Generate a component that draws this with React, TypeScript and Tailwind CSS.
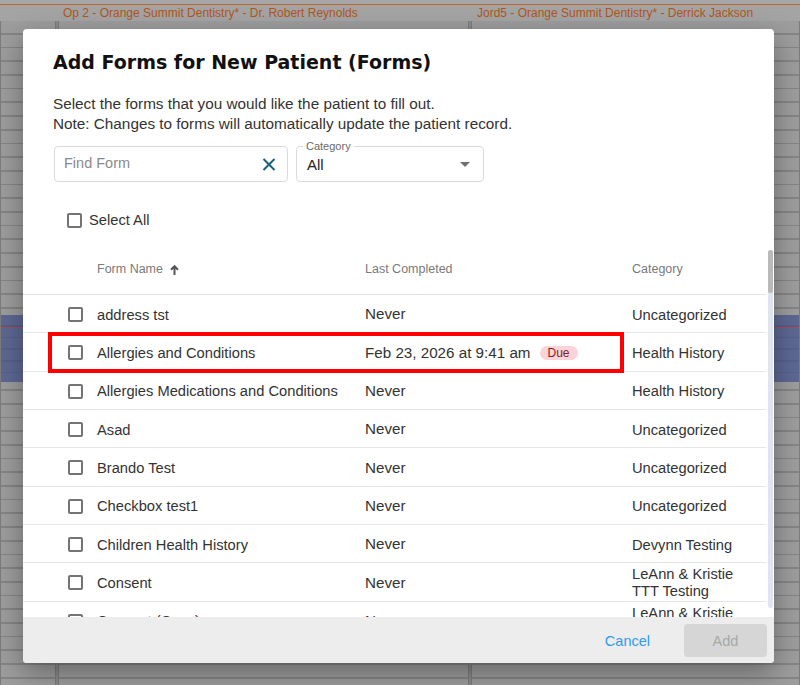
import { ReactNode } from 'react'

type Row = { name: string; last: string; due?: boolean; cat: string[] }

const rows: Row[] = [
  { name: 'address tst', last: 'Never', cat: ['Uncategorized'] },
  { name: 'Allergies and Conditions', last: 'Feb 23, 2026 at 9:41 am', due: true, cat: ['Health History'] },
  { name: 'Allergies Medications and Conditions', last: 'Never', cat: ['Health History'] },
  { name: 'Asad', last: 'Never', cat: ['Uncategorized'] },
  { name: 'Brando Test', last: 'Never', cat: ['Uncategorized'] },
  { name: 'Checkbox test1', last: 'Never', cat: ['Uncategorized'] },
  { name: 'Children Health History', last: 'Never', cat: ['Devynn Testing'] },
  { name: 'Consent', last: 'Never', cat: ['LeAnn & Kristie', 'TTT Testing'] },
  { name: 'Consent (Copy)', last: 'Never', cat: ['LeAnn & Kristie', 'TTT Testing'] },
]

function Box() {
  return <span className="block h-[15px] w-[15px] shrink-0 rounded-[2px] border-2 border-[#747474] bg-white" />
}

function Column({ className }: { className: string }) {
  // calendar column: slot lines + the selected (blue) slot block
  return (
    <div
      className={`relative h-full border-x border-[#7c7c7c] bg-[#9d9d9d] bg-[repeating-linear-gradient(to_bottom,transparent_0px,transparent_12px,#858585_12px,#858585_13.7px)] ${className}`}
    >
      <div className="absolute left-0 right-0 top-[294px] h-[67px] bg-[#5d6893] bg-[repeating-linear-gradient(to_bottom,transparent_0px,transparent_10px,#56608a_10px,#56608a_11.7px)]">
        <div className="mt-[11px] h-px bg-[#a2434f]" />
      </div>
    </div>
  )
}

function Backdrop() {
  return (
    <div className="flex h-full flex-col">
      <div className="h-[5px] border-b border-[#c0682e] bg-[#a7a7a7]" />
      <div className="flex h-[16px] items-center bg-[#a4a4a4] text-[12px] leading-none text-[#b0561c]">
        <div className="w-[63px]" />
        <div className="w-[414px]">Op 2 - Orange Summit Dentistry* - Dr. Robert Reynolds</div>
        <div>Jord5 - Orange Summit Dentistry* - Derrick Jackson</div>
      </div>
      <div className="flex flex-1 gap-[2px] bg-[#8b8b8b]">
        <Column className="w-[56px]" />
        <Column className="w-[411px]" />
        <Column className="flex-1" />
      </div>
    </div>
  )
}

function Cell({ children, className = '' }: { children: ReactNode; className?: string }) {
  return <div className={`flex items-center ${className}`}>{children}</div>
}

export default function App() {
  return (
    <div className="relative h-[685px] w-[800px] overflow-hidden bg-[#9c9c9c] font-['Liberation_Sans',Arial,sans-serif]">
      <Backdrop />

      <div className="absolute left-[23px] top-[29px] flex h-[634px] w-[751px] flex-col overflow-hidden rounded-[4px] bg-white shadow-[0_10px_28px_rgba(0,0,0,0.35)]">
        <div className="px-[30px] pt-[21px]">
          <h2 className="font-['DejaVu_Sans',sans-serif] text-[19px] font-bold leading-[24px] text-[#111]">
            Add Forms for New Patient (Forms)
          </h2>
          <p className="mt-[20px] text-[15.3px] leading-[20px] text-[#333]">
            Select the forms that you would like the patient to fill out.
            <br />
            Note: Changes to forms will automatically update the patient record.
          </p>
          <div className="mt-[12px] flex gap-[8px] pl-px">
            <div className="flex h-[36px] w-[234px] items-center justify-between rounded-[4px] border border-[#dadada] pl-[9px] pr-[11px]">
              <span className="text-[14.5px] text-[#8a8a8a]">Find Form</span>
              <svg width="14" height="13" viewBox="0 0 14 13" className="text-[#17617f]">
                <path d="M1.5 1 L12.5 12 M12.5 1 L1.5 12" stroke="currentColor" strokeWidth="2" fill="none" />
              </svg>
            </div>
            <div className="relative flex h-[36px] w-[188px] items-center justify-between rounded-[4px] border border-[#dadada] pl-[10px] pr-[13px] pt-[3px]">
              <span className="absolute left-[6px] top-[-7px] bg-white px-[3px] text-[11px] leading-[12px] text-[#6a6a6a]">
                Category
              </span>
              <span className="text-[15px] text-[#222]">All</span>
              <svg width="10" height="5" viewBox="0 0 10 5" className="mt-[-2px] text-[#707070]">
                <path d="M0 0 L10 0 L5 5 Z" fill="currentColor" />
              </svg>
            </div>
          </div>
        </div>

        <div className="flex h-[66px] items-center gap-[7px] pl-[44px] pt-[10px]">
          <Box />
          <span className="text-[14.7px] text-[#333]">Select All</span>
        </div>

        <div className="flex min-h-0 flex-1">
          <div className="flex-1 overflow-hidden">
            <div className="flex h-[47px] items-center border-b border-[#e2e2e2] pb-[3px] pl-[74px] text-[12.5px] text-[#7a7a7a]">
              <Cell className="w-[268px] gap-[7px]">
                Form Name
                <svg width="9" height="10" viewBox="0 0 9 10" className="text-[#555]">
                  <path d="M4.5 10 V1.5 M1 4.8 L4.5 1.2 L8 4.8" stroke="currentColor" strokeWidth="2" fill="none" />
                </svg>
              </Cell>
              <Cell className="w-[267px]">Last Completed</Cell>
              <Cell>Category</Cell>
            </div>

            {rows.map((r) => (
              <div
                key={r.name}
                className="relative flex h-[38.33px] shrink-0 items-center border-b border-[#e6e6e6] pl-[45px] pt-[2px] text-[14.7px] text-[#333]"
              >
                <Box />
                <Cell className="ml-[14px] w-[268px]">{r.name}</Cell>
                <Cell className="w-[267px] gap-[9px]">
                  <span className="text-[15.2px]">{r.last}</span>
                  {r.due && (
                    <span className="flex h-[14px] w-[38px] items-center justify-center rounded-full bg-[#fbd3d8] text-[12px] leading-none text-[#7c1f28]">
                      Due
                    </span>
                  )}
                </Cell>
                <div className="flex flex-col pt-px leading-[17px]">
                  {r.cat.map((c) => (
                    <span key={c}>{c}</span>
                  ))}
                </div>
                {r.due && (
                  <div className="pointer-events-none absolute left-[25px] top-[-1px] h-[41px] w-[576px] border-4 border-[#ff0000]" />
                )}
              </div>
            ))}
          </div>
          <div className="w-[8px] pb-[9px] pl-[2px] pr-px pt-[2px]">
            <div className="h-full w-[5px] rounded-full bg-[#dfe4ee]">
              <div className="h-[43px] w-[5px] rounded-full bg-[#b9b9b9]" />
            </div>
          </div>
        </div>

        <div className="flex h-[46px] shrink-0 items-center justify-end bg-[#ededed] pr-[7px]">
          <button className="mr-[34px] pt-[3px] text-[14.5px] text-[#2f9bf0]">Cancel</button>
          <button className="h-[33px] w-[83px] rounded-[4px] bg-[#d6d6d6] pt-[3px] text-[14.5px] text-[#a8a8a8]">Add</button>
        </div>
      </div>
    </div>
  )
}
